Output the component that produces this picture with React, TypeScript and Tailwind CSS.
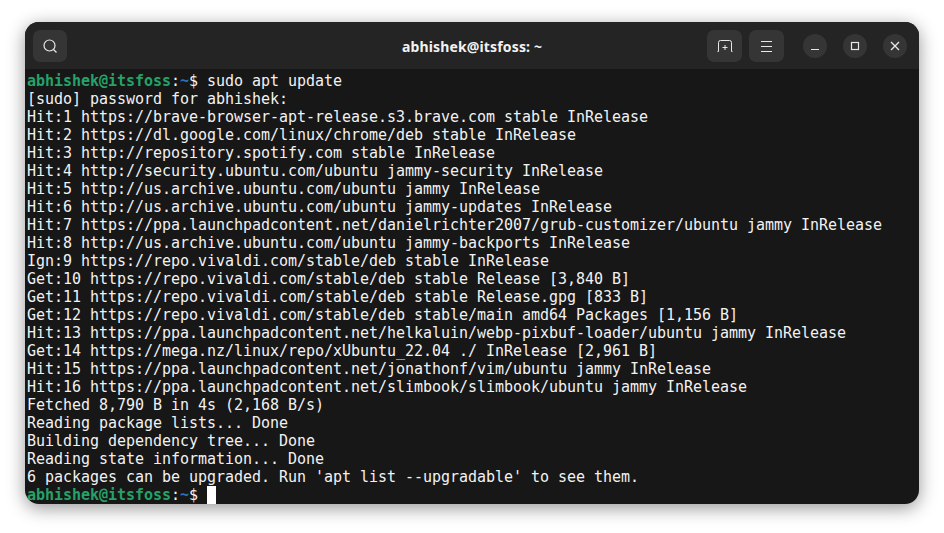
import React from 'react';

const lines = [
  '[sudo] password for abhishek:',
  'Hit:1 https://brave-browser-apt-release.s3.brave.com stable InRelease',
  'Hit:2 https://dl.google.com/linux/chrome/deb stable InRelease',
  'Hit:3 http://repository.spotify.com stable InRelease',
  'Hit:4 http://security.ubuntu.com/ubuntu jammy-security InRelease',
  'Hit:5 http://us.archive.ubuntu.com/ubuntu jammy InRelease',
  'Hit:6 http://us.archive.ubuntu.com/ubuntu jammy-updates InRelease',
  'Hit:7 https://ppa.launchpadcontent.net/danielrichter2007/grub-customizer/ubuntu jammy InRelease',
  'Hit:8 http://us.archive.ubuntu.com/ubuntu jammy-backports InRelease',
  'Ign:9 https://repo.vivaldi.com/stable/deb stable InRelease',
  'Get:10 https://repo.vivaldi.com/stable/deb stable Release [3,840 B]',
  'Get:11 https://repo.vivaldi.com/stable/deb stable Release.gpg [833 B]',
  'Get:12 https://repo.vivaldi.com/stable/deb stable/main amd64 Packages [1,156 B]',
  'Hit:13 https://ppa.launchpadcontent.net/helkaluin/webp-pixbuf-loader/ubuntu jammy InRelease',
  'Get:14 https://mega.nz/linux/repo/xUbuntu_22.04 ./ InRelease [2,961 B]',
  'Hit:15 https://ppa.launchpadcontent.net/jonathonf/vim/ubuntu jammy InRelease',
  'Hit:16 https://ppa.launchpadcontent.net/slimbook/slimbook/ubuntu jammy InRelease',
  'Fetched 8,790 B in 4s (2,168 B/s)',
  'Reading package lists... Done',
  'Building dependency tree... Done',
  'Reading state information... Done',
  "6 packages can be upgraded. Run 'apt list --upgradable' to see them.",
];

function Prompt() {
  return (
    <>
      <span className="font-bold text-[#26a269]">abhishek@itsfoss</span>
      <span>:</span>
      <span className="font-bold text-[#2a6fb8]">~</span>
      <span>$ </span>
    </>
  );
}

export default function App() {
  return (
    <div className="w-[944px] h-[533px] bg-white pl-[25px] pt-[22px] overflow-hidden">
      <div className="w-[894px] h-[482px] rounded-[14px] overflow-hidden bg-[#171717] shadow-[0_4px_18px_rgba(0,0,0,0.42)] flex flex-col">
        <div className="h-[47px] shrink-0 bg-[#242424] flex items-center pl-[8px] pr-[12px] pt-[1px]">
          <div className="flex-1 flex">
            <button className="w-[34px] h-[32px] rounded-[7px] bg-[#353535] flex items-center justify-center">
              <svg width="16" height="16" viewBox="0 0 16 16" fill="none" stroke="#e8e8e8" strokeWidth="1.2">
                <circle cx="7.5" cy="7.5" r="5.5" />
                <path d="M11.5 11.5L14.5 14.5" />
              </svg>
            </button>
          </div>
          <div className="ml-[4px] text-[14px] font-bold tracking-[0.15px] text-[#f2f2f2] font-['Noto_Sans','Open_Sans',sans-serif]">
            abhishek@itsfoss: ~
          </div>
          <div className="flex-1 flex items-center justify-end">
            <button className="w-[35px] h-[32px] rounded-[7px] bg-[#353535] flex items-center justify-center">
              <svg width="16" height="12" viewBox="0 0 16 12" fill="none" stroke="#e8e8e8" strokeWidth="1">
                <path d="M0.5 11.5H1.5V2.5Q1.5 0.5 3.5 0.5H12.5Q14.5 0.5 14.5 2.5V11.5H15.5" />
                <path d="M8 5V10M5.5 7.5H10.5" />
              </svg>
            </button>
            <button className="ml-[7px] w-[35px] h-[32px] rounded-[7px] bg-[#353535] flex items-center justify-center">
              <svg width="11" height="11" viewBox="0 0 11 11" fill="none" stroke="#e8e8e8" strokeWidth="1">
                <path d="M0 0.5H11M0 5.5H11M0 10.5H11" />
              </svg>
            </button>
            <button className="ml-[19px] w-[24px] h-[24px] rounded-full bg-[#353535] flex items-center justify-center">
              <svg width="10" height="10" viewBox="0 0 10 10" fill="none" stroke="#e8e8e8" strokeWidth="1.2">
                <path d="M1 8.5H9" />
              </svg>
            </button>
            <button className="ml-[16px] w-[24px] h-[24px] rounded-full bg-[#353535] flex items-center justify-center">
              <svg width="10" height="10" viewBox="0 0 10 10" fill="none" stroke="#e8e8e8" strokeWidth="1.2">
                <rect x="1.5" y="1.5" width="7" height="7" />
              </svg>
            </button>
            <button className="ml-[16px] w-[24px] h-[24px] rounded-full bg-[#353535] flex items-center justify-center">
              <svg width="10" height="10" viewBox="0 0 10 10" fill="none" stroke="#e8e8e8" strokeWidth="1.3">
                <path d="M1 1L9 9M9 1L1 9" />
              </svg>
            </button>
          </div>
        </div>
        <div className="pl-[2px] pt-[3px] font-['DejaVu_Sans_Mono',monospace] text-[15px] leading-[18px] tracking-[-0.03px] text-[#f2f2f2] whitespace-pre">
          <div>
            <Prompt />sudo apt update
          </div>
          {lines.map((l) => (
            <div key={l}>{l}</div>
          ))}
          <div className="flex">
            <span><Prompt /></span>
            <span className="w-[9px] h-[18px] bg-white" />
          </div>
        </div>
      </div>
    </div>
  );
}
